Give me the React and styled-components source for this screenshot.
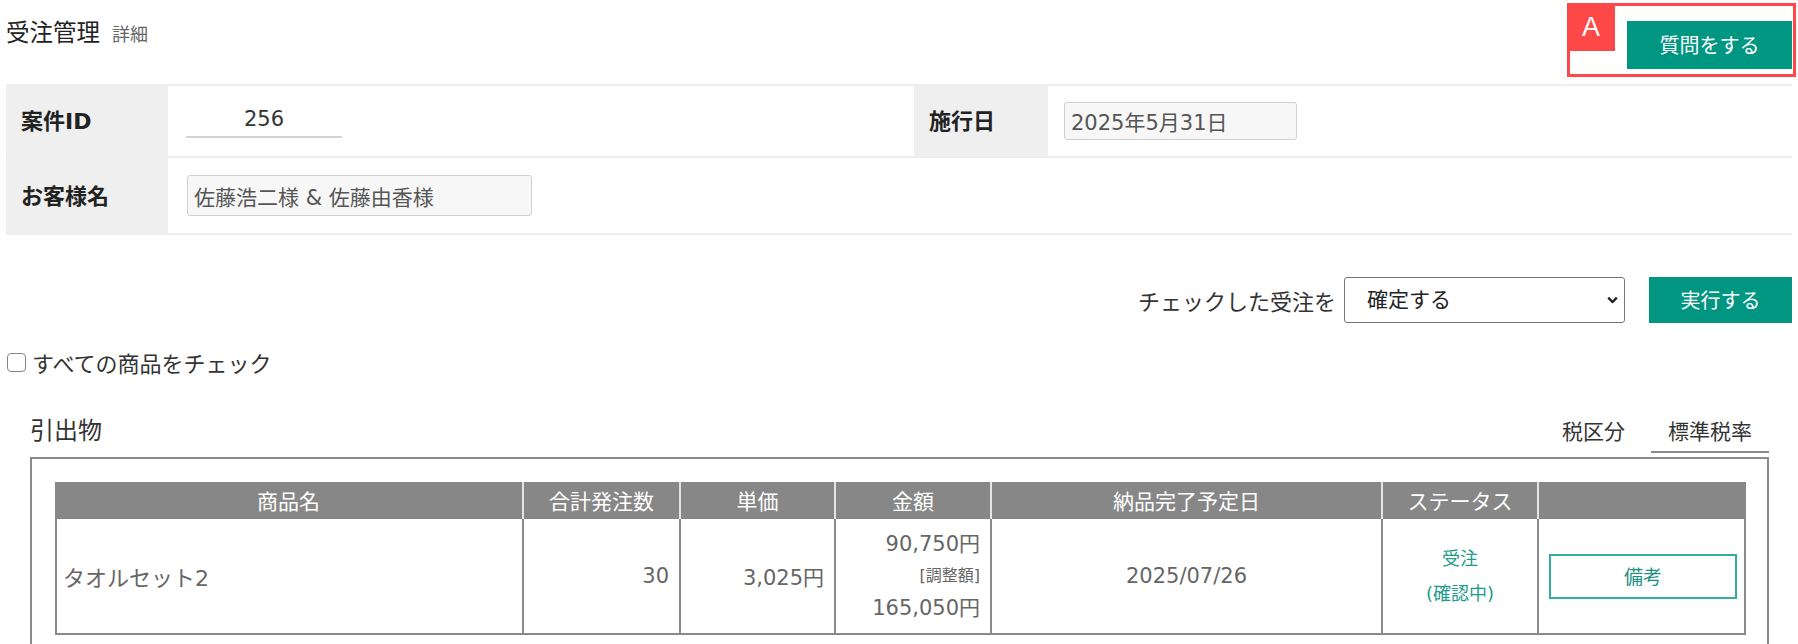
import React from "react";
import styled, { createGlobalStyle } from "styled-components";

const FONT = `"DejaVu Sans", "Noto Sans CJK JP", sans-serif`;

const GlobalStyle = createGlobalStyle`
  html, body { margin: 0; padding: 0; background: #fff; }
  body { font-family: ${FONT}; color: #333; }
  * { box-sizing: border-box; }
`;

const Page = styled.div`
  width: 1798px;
  padding: 0 6px;
  font-family: ${FONT};
`;

/* ---------- header ---------- */
const Header = styled.header`
  display: flex;
  justify-content: space-between;
  align-items: flex-start;
  height: 84px;
`;

const TitleGroup = styled.div`
  display: flex;
  align-items: baseline;
  gap: 12px;
  margin-top: 18px;
`;

const Title = styled.h1`
  margin: 0;
  font-size: 23.5px;
  font-weight: 400;
  line-height: 30px;
  color: #222;
`;

const SubTitle = styled.span`
  font-size: 18px;
  line-height: 30px;
  color: #666;
`;

const AnnotatedSlot = styled.div`
  position: relative;
  margin-top: 21px;
`;

const Annotation = styled.div`
  position: absolute;
  left: -60px;
  top: -18px;
  right: -4px;
  bottom: -8px;
  border: 3px solid #ff4848;
  pointer-events: none;
`;

const AnnotationBadge = styled.span`
  position: absolute;
  left: -3px;
  top: -3px;
  width: 48px;
  height: 48px;
  background: #ff4848;
  color: #fff;
  font: 400 27px/48px "Liberation Sans", Arial, sans-serif;
  text-align: center;
`;

const PrimaryButton = styled.button`
  display: inline-flex;
  align-items: center;
  justify-content: center;
  width: ${(p) => p.$w}px;
  height: ${(p) => p.$h}px;
  padding: 0 0 2px;
  border: none;
  border-radius: 0;
  background: #009682;
  color: #fff;
  font-family: ${FONT};
  font-size: 20px;
  cursor: pointer;
`;

/* ---------- info grid ---------- */
const InfoGrid = styled.div`
  display: grid;
  grid-template-columns: 162px 746px 134px 1fr;
  border-top: 2px solid #eeeeee;
`;

const LabelCell = styled.div`
  display: flex;
  align-items: center;
  height: ${(p) => p.$h}px;
  padding: 0 0 4px ${(p) => p.$pl}px;
  background: #efefef;
  border-bottom: 2px solid #eeeeee;
  font-size: 22px;
  font-weight: 700;
  color: #222;
`;

const ValueCell = styled.div`
  display: flex;
  align-items: center;
  height: ${(p) => p.$h}px;
  padding-left: ${(p) => p.$pl}px;
  border-bottom: 2px solid #eeeeee;
  grid-column: span ${(p) => p.$span || 1};
`;

const UnderlineInput = styled.input`
  width: 156px;
  height: 34px;
  padding: 0 0 2px;
  border: none;
  border-bottom: 2px solid #d2d2d2;
  background: transparent;
  text-align: center;
  font: 400 21px ${FONT};
  color: #333;
  outline: none;
`;

const BoxInput = styled.input`
  width: ${(p) => p.$w}px;
  height: ${(p) => p.$h}px;
  padding: 0 6px;
  border: 1px solid #d0d0d0;
  border-radius: 3px;
  background: #f7f7f7;
  font: 400 21px ${FONT};
  color: #555;
  outline: none;
`;

/* ---------- bulk action ---------- */
const ActionBar = styled.div`
  display: flex;
  justify-content: flex-end;
  align-items: center;
  height: 46px;
  margin-top: 42px;
`;

const ActionLabel = styled.span`
  margin-right: 8px;
  font-size: 22px;
  color: #333;
`;

const SelectWrap = styled.div`
  position: relative;
  width: 281px;
  height: 46px;
  margin-right: 24px;
`;

const Select = styled.select`
  appearance: none;
  width: 100%;
  height: 100%;
  padding: 0 0 0 22px;
  border: 1px solid #767676;
  border-radius: 3px;
  background: #fff;
  font: 400 21px ${FONT};
  color: #222;
  outline: none;
`;

const Chevron = styled.svg`
  position: absolute;
  right: 7px;
  top: 50%;
  transform: translateY(-50%);
  pointer-events: none;
`;

/* ---------- check all ---------- */
const CheckRow = styled.label`
  display: flex;
  align-items: center;
  gap: 6px;
  height: 20px;
  margin-top: 29px;
  padding-left: 1px;
  font-size: 22px;
  color: #333;
`;

const CheckBox = styled.input.attrs({ type: "checkbox" })`
  appearance: none;
  width: 19px;
  height: 19px;
  margin: 0;
  border: 1.5px solid #858585;
  border-radius: 4px;
  background: #fff;
`;

/* ---------- section ---------- */
const SectionHead = styled.div`
  display: flex;
  justify-content: space-between;
  align-items: stretch;
  height: 46px;
  margin-top: 35px;
  padding: 0 23px 0 24px;
`;

const SectionTitle = styled.h2`
  display: flex;
  align-items: center;
  margin: 0;
  padding-bottom: 4px;
  font-size: 24px;
  font-weight: 400;
  color: #333;
`;

const Tabs = styled.div`
  display: flex;
  align-items: stretch;
  gap: 26px;
`;

const Tab = styled.div`
  display: flex;
  align-items: center;
  justify-content: center;
  width: ${(p) => (p.$active ? "118px" : "auto")};
  padding-top: 2px;
  border-bottom: 2px solid ${(p) => (p.$active ? "#8a8a8a" : "transparent")};
  font-size: 21px;
  color: #333;
`;

const ItemBox = styled.div`
  margin: 4px 23px 0 24px;
  padding: 23px;
  border: 2px solid #8a8a8a;
`;

const ItemTable = styled.table`
  width: 1691px;
  border-collapse: separate;
  border-spacing: 0;
  table-layout: fixed;
  font-size: 21px;
`;

const Th = styled.th`
  height: 37px;
  padding: 0 0 2px;
  background: #878787;
  color: #fff;
  font-weight: 400;
  text-align: center;
  border-right: 2px solid #e4e4e4;
  &:last-child {
    border-right: none;
  }
`;

const Td = styled.td`
  height: 116px;
  padding: 0 10px;
  border-right: 2px solid #8a8a8a;
  border-bottom: 2px solid #8a8a8a;
  text-align: ${(p) => p.$align || "center"};
  vertical-align: middle;
  color: #666;
  font-size: ${(p) => (p.$align === "left" ? "22px" : "21px")};
  &:first-child {
    border-left: 2px solid #8a8a8a;
    padding-left: 6px;
  }
`;

const AmountLine = styled.div`
  line-height: 32px;
  font-size: ${(p) => (p.$small ? "16px" : "21px")};
`;

const StatusLine = styled.div`
  line-height: 35px;
  font-size: 18px;
  color: #1e9c8b;
`;

const NoteButton = styled.button`
  width: 188px;
  height: 45px;
  padding: 0 0 2px;
  border: 2px solid #36ab9d;
  border-radius: 0;
  background: #fff;
  font: 400 19px ${FONT};
  color: #1d8f80;
  cursor: pointer;
`;

const columns = [
  { label: "商品名", w: 469 },
  { label: "合計発注数", w: 157 },
  { label: "単価", w: 155 },
  { label: "金額", w: 156 },
  { label: "納品完了予定日", w: 391 },
  { label: "ステータス", w: 156 },
  { label: "", w: 207 },
];

export default function App() {
  return (
    <Page>
      <GlobalStyle />
      <Header>
        <TitleGroup>
          <Title>受注管理</Title>
          <SubTitle>詳細</SubTitle>
        </TitleGroup>
        <AnnotatedSlot>
          <PrimaryButton $w={165} $h={48}>質問をする</PrimaryButton>
          <Annotation>
            <AnnotationBadge>A</AnnotationBadge>
          </Annotation>
        </AnnotatedSlot>
      </Header>

      <InfoGrid>
        <LabelCell $h={72} $pl={15}>案件ID</LabelCell>
        <ValueCell $h={72} $pl={18}>
          <UnderlineInput defaultValue="256" readOnly />
        </ValueCell>
        <LabelCell $h={72} $pl={15}>施行日</LabelCell>
        <ValueCell $h={72} $pl={16}>
          <BoxInput $w={233} $h={38} defaultValue="2025年5月31日" readOnly />
        </ValueCell>
        <LabelCell $h={77} $pl={15}>お客様名</LabelCell>
        <ValueCell $h={77} $pl={19} $span={3}>
          <BoxInput $w={345} $h={41} defaultValue="佐藤浩二様 & 佐藤由香様" readOnly />
        </ValueCell>
      </InfoGrid>

      <ActionBar>
        <ActionLabel>チェックした受注を</ActionLabel>
        <SelectWrap>
          <Select defaultValue="confirm">
            <option value="confirm">確定する</option>
          </Select>
          <Chevron width="11" height="7" viewBox="0 0 11 7">
            <path d="M1.2 1.2 L5.5 5.5 L9.8 1.2" fill="none" stroke="#222" strokeWidth="2.4" />
          </Chevron>
        </SelectWrap>
        <PrimaryButton $w={143} $h={46}>実行する</PrimaryButton>
      </ActionBar>

      <CheckRow>
        <CheckBox />
        すべての商品をチェック
      </CheckRow>

      <SectionHead>
        <SectionTitle>引出物</SectionTitle>
        <Tabs>
          <Tab>税区分</Tab>
          <Tab $active>標準税率</Tab>
        </Tabs>
      </SectionHead>

      <ItemBox>
        <ItemTable>
          <colgroup>
            {columns.map((c, i) => (
              <col key={i} style={{ width: c.w }} />
            ))}
          </colgroup>
          <thead>
            <tr>
              {columns.map((c, i) => (
                <Th key={i}>{c.label}</Th>
              ))}
            </tr>
          </thead>
          <tbody>
            <tr>
              <Td $align="left">タオルセット2</Td>
              <Td $align="right">30</Td>
              <Td $align="right">3,025円</Td>
              <Td $align="right">
                <AmountLine>90,750円</AmountLine>
                <AmountLine $small>[調整額]</AmountLine>
                <AmountLine>165,050円</AmountLine>
              </Td>
              <Td>2025/07/26</Td>
              <Td>
                <StatusLine>受注</StatusLine>
                <StatusLine>(確認中)</StatusLine>
              </Td>
              <Td>
                <NoteButton>備考</NoteButton>
              </Td>
            </tr>
          </tbody>
        </ItemTable>
      </ItemBox>
    </Page>
  );
}
